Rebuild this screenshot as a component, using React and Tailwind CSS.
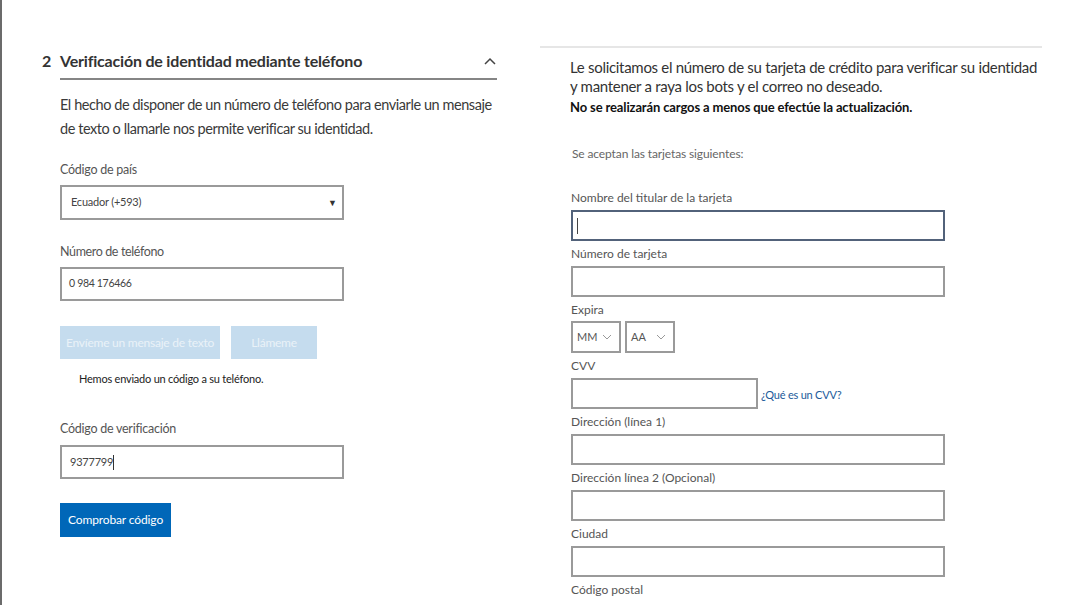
import React from "react";

const F = { fontFamily: "Lato, 'Open Sans', 'Liberation Sans', sans-serif" };

function Label({ children, className = "" }) {
  return (
    <div className={`text-[12px] leading-[16px] text-[#555] ${className}`}>{children}</div>
  );
}

function Box({ className = "", children }) {
  return (
    <div className={`border-2 border-[#9a9a9a] bg-white ${className}`}>{children}</div>
  );
}

function Chevron({ gap }) {
  return (
    <svg width="10" height="6" viewBox="0 0 10 6" className={gap}>
      <path d="M1 1 L5 5 L9 1" fill="none" stroke="#999" strokeWidth="1" />
    </svg>
  );
}

export default function App() {
  return (
    <div style={F} className="w-[1080px] h-[605px] overflow-hidden bg-white flex border-l-2 border-[#6b6b6b]">
      {/* Left column */}
      <div className="w-[538px] shrink-0 pl-[40px] pt-[49px]">
        <div className="flex">
          <div className="w-[18px] text-[16px] leading-[24px] font-bold text-[#333]">2</div>
          <div className="w-[437px] flex items-center justify-between border-b-2 border-[#858585] pb-[5px]">
            <span className="text-[16px] leading-[24px] font-bold text-[#333] tracking-[-0.012em]">
              Verificación de identidad mediante teléfono
            </span>
            <svg width="12" height="8" viewBox="0 0 12 8" className="mr-[1px]">
              <path d="M1 7 L6 2 L11 7" fill="none" stroke="#444" strokeWidth="1.5" />
            </svg>
          </div>
        </div>
        <div className="ml-[18px] mt-[13px] text-[14.5px] leading-[24px] text-[#3a3a3a] tracking-[-0.03em] whitespace-nowrap">
          <div>El hecho de disponer de un número de teléfono para enviarle un mensaje</div>
          <div>de texto o llamarle nos permite verificar su identidad.</div>
        </div>
        <div className="ml-[18px]">
          <div className="mt-[19px] text-[12.5px] leading-[20px] text-[#555] tracking-[-0.02em]">Código de país</div>
          <Box className="mt-[5px] w-[284px] h-[35px] flex items-center justify-between pl-[9px] pr-[5px]">
            <span className="text-[11px] text-[#444] tracking-[-0.02em]">Ecuador (+593)</span>
            <span className="text-[9px] text-[#333]">▼</span>
          </Box>
          <div className="mt-[22px] text-[12.5px] leading-[20px] text-[#555] tracking-[-0.03em]">Número de teléfono</div>
          <Box className="mt-[5px] w-[284px] h-[34px] flex items-center pl-[7px]">
            <span className="text-[10.5px] text-[#444] tracking-[-0.03em]">0 984 176466</span>
          </Box>
          <div className="mt-[25px] flex gap-[11px]">
            <div className="w-[160px] h-[33px] bg-[#c5dcee] flex items-center justify-center text-[12px] text-[#eaf2f8] tracking-[-0.02em]">
              Envíeme un mensaje de texto
            </div>
            <div className="w-[86px] h-[33px] bg-[#c5dcee] flex items-center justify-center text-[12px] text-[#eaf2f8] tracking-[-0.02em]">
              Llámeme
            </div>
          </div>
          <div className="mt-[12px] ml-[19px] text-[11px] leading-[16px] text-[#222] tracking-[-0.02em]">
            Hemos enviado un código a su teléfono.
          </div>
          <div className="mt-[32px] text-[12.5px] leading-[20px] text-[#555] tracking-[-0.02em]">Código de verificación</div>
          <Box className="mt-[6px] w-[284px] h-[34px] flex items-center pl-[8px] border-[#8e9aa8]">
            <span className="text-[11px] text-[#444] tracking-[-0.02em]">9377799</span>
            <span className="w-[1px] h-[15px] bg-[#333]" />
          </Box>
          <div className="mt-[24px] w-[111px] h-[34px] bg-[#0067b8] flex items-center justify-center text-[12px] text-white tracking-[-0.01em]">
            Comprobar código
          </div>
        </div>
      </div>

      {/* Right column */}
      <div className="w-[502px] shrink-0 pt-[46px]">
        <div className="h-[2px] bg-[#e6e6e6]" />
        <div className="pl-[30px]">
          <div className="mt-[10px] text-[15px] leading-[19px] text-[#333] tracking-[-0.02em] whitespace-nowrap">
            <div>Le solicitamos el número de su tarjeta de crédito para verificar su identidad</div>
            <div>y mantener a raya los bots y el correo no deseado.</div>
          </div>
          <div className="mt-[3px] text-[13px] leading-[16px] font-bold text-[#111] tracking-[-0.01em]">
            No se realizarán cargos a menos que efectúe la actualización.
          </div>
          <div className="mt-[31px] ml-[2px] text-[12px] leading-[16px] text-[#666] tracking-[-0.01em]">
            Se aceptan las tarjetas siguientes:
          </div>
          <div className="ml-[1px]">
            <Label className="mt-[28px]">Nombre del titular de la tarjeta</Label>
            <div className="mt-[4px] w-[374px] h-[31px] border-2 border-[#52627a] flex items-center pl-[4px]">
              <span className="w-[1px] h-[16px] bg-[#444]" />
            </div>
            <Label className="mt-[5px]">Número de tarjeta</Label>
            <Box className="mt-[4px] w-[374px] h-[31px]" />
            <Label className="mt-[5px]">Expira</Label>
            <div className="mt-[3px] flex gap-[4px]">
              <Box className="w-[50px] h-[32px] flex items-center pl-[4px]">
                <span className="text-[11px] text-[#555]">MM</span>
                <Chevron gap="ml-[5px]" />
              </Box>
              <Box className="w-[50px] h-[32px] flex items-center pl-[4px]">
                <span className="text-[11px] text-[#555]">AA</span>
                <Chevron gap="ml-[10px]" />
              </Box>
            </div>
            <Label className="mt-[5px]">CVV</Label>
            <div className="mt-[4px] flex items-center">
              <Box className="w-[187px] h-[31px]" />
              <span className="ml-[3px] mt-[4px] text-[11px] text-[#1a5a9a] tracking-[-0.02em]">¿Qué es un CVV?</span>
            </div>
            <Label className="mt-[5px]">Dirección (línea 1)</Label>
            <Box className="mt-[4px] w-[374px] h-[31px]" />
            <Label className="mt-[5px]">Dirección línea 2 (Opcional)</Label>
            <Box className="mt-[4px] w-[374px] h-[31px]" />
            <Label className="mt-[5px]">Ciudad</Label>
            <Box className="mt-[4px] w-[374px] h-[31px]" />
            <Label className="mt-[5px]">Código postal</Label>
          </div>
        </div>
      </div>
    </div>
  );
}
